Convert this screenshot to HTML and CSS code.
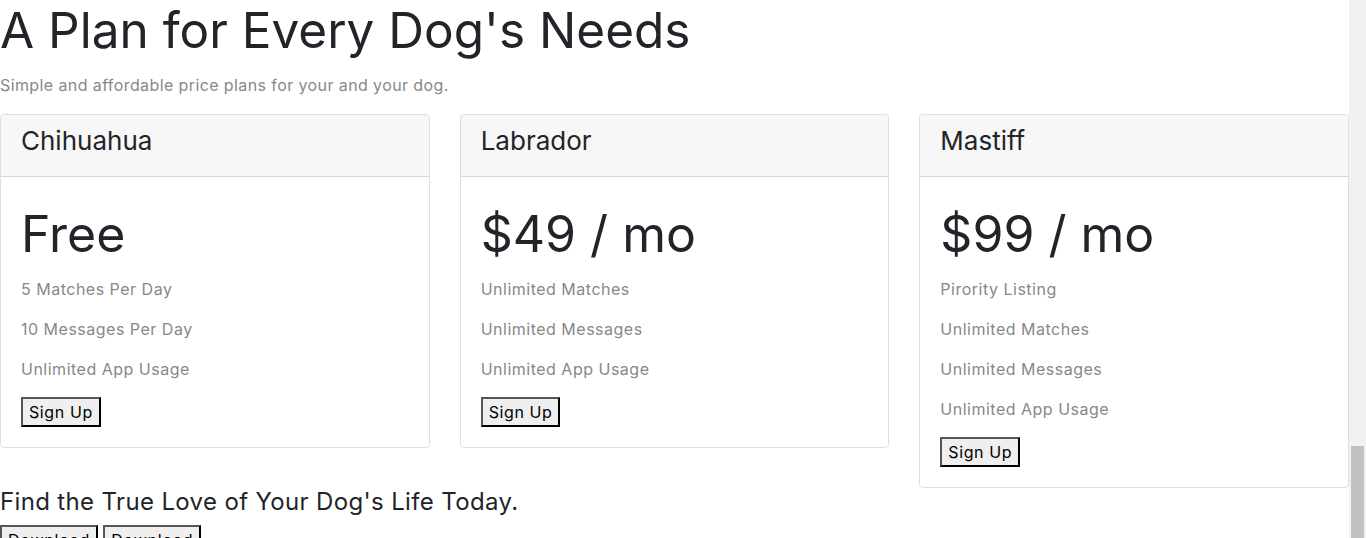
FILE: index.html
```html
<!DOCTYPE html>
<html lang="en">
<head>
<meta charset="utf-8">
<title>Pricing</title>
<link rel="stylesheet" href="styles.css">
</head>
<body>
<div class="page">
  <main class="main">
    <section class="pricing">
      <h1 class="title">A Plan for Every Dog's Needs</h1>
      <p class="lead">Simple and affordable price plans for your and your dog.</p>
      <div class="cards">
        <div class="card">
          <div class="card-header"><h3>Chihuahua</h3></div>
          <div class="card-body">
            <h2 class="price">Free</h2>
            <p class="feature">5 Matches Per Day</p>
            <p class="feature">10 Messages Per Day</p>
            <p class="feature">Unlimited App Usage</p>
            <button class="btn" type="button">Sign Up</button>
          </div>
        </div>
        <div class="card">
          <div class="card-header"><h3>Labrador</h3></div>
          <div class="card-body">
            <h2 class="price">$49 / mo</h2>
            <p class="feature">Unlimited Matches</p>
            <p class="feature">Unlimited Messages</p>
            <p class="feature">Unlimited App Usage</p>
            <button class="btn" type="button">Sign Up</button>
          </div>
        </div>
        <div class="card">
          <div class="card-header"><h3>Mastiff</h3></div>
          <div class="card-body">
            <h2 class="price">$99 / mo</h2>
            <p class="feature">Pirority Listing</p>
            <p class="feature">Unlimited Matches</p>
            <p class="feature">Unlimited Messages</p>
            <p class="feature">Unlimited App Usage</p>
            <button class="btn" type="button">Sign Up</button>
          </div>
        </div>
      </div>
    </section>
    <section class="cta">
      <h3 class="cta-title">Find the True Love of Your Dog's Life Today.</h3>
      <div class="cta-buttons">
        <button class="btn btn-dl" type="button">Download</button>
        <button class="btn btn-dl" type="button">Download</button>
      </div>
    </section>
  </main>
  <div class="scrollbar"><div class="thumb"></div></div>
</div>
</body>
</html>
```

FILE: styles.css
```css
* { box-sizing: border-box; }
html, body { margin: 0; padding: 0; }
body {
  font-family: Inter, "Liberation Sans", sans-serif;
  color: #212529;
  background: #fff;
  font-size: 16px;
  line-height: 24px;
}
.page {
  display: flex;
  height: 538px;
  overflow: hidden;
}
.main {
  flex: 1;
  min-width: 0;
}
.title {
  margin: 0;
  font-size: 49.5px;
  line-height: 60px;
  font-weight: 400;
}
.lead {
  margin: 13px 0 17px;
  color: #888;
  font-size: 16px;
  line-height: 24px;
  letter-spacing: 0.4px;
}
.cards {
  display: grid;
  grid-template-columns: repeat(3, 1fr);
  column-gap: 30px;
  align-items: start;
}
.card {
  border: 1px solid rgba(0,0,0,.125);
  border-radius: 4px;
  overflow: hidden;
}
.card-header {
  background: #f7f7f7;
  border-bottom: 1px solid rgba(0,0,0,.125);
  padding: 9px 20px 18px;
}
.card-header h3 {
  margin: 0;
  font-size: 26px;
  line-height: 34px;
  font-weight: 400;
}
.card-body {
  padding: 20px;
}
.price {
  margin: 7px 0 13px;
  font-size: 50px;
  line-height: 60px;
  font-weight: 400;
}
.feature {
  margin: 0 0 16px;
  color: #888;
  letter-spacing: 0.5px;
}
.btn {
  display: block;
  height: 30px;
  font-family: inherit;
  font-size: 16px;
  line-height: 24px;
  letter-spacing: 0.6px;
  color: #000;
  background: #efefef;
  padding: 1px 6px;
  border: 2px solid;
  border-color: #555 #000 #000 #555;
  border-radius: 0;
  margin: 0;
}
.btn-dl {
  letter-spacing: 0.8px;
}
.cta-title {
  margin: 1px 0 10px;
  font-size: 24px;
  line-height: 26px;
  font-weight: 400;
  letter-spacing: 0.35px;
}
.cta-buttons {
  display: flex;
  gap: 5px;
}
.scrollbar {
  width: 17px;
  background: #f1f1f1;
  display: flex;
  flex-direction: column;
  justify-content: flex-end;
  padding: 0 2px;
}
.thumb {
  height: 92px;
  background: #c1c1c1;
}
```
